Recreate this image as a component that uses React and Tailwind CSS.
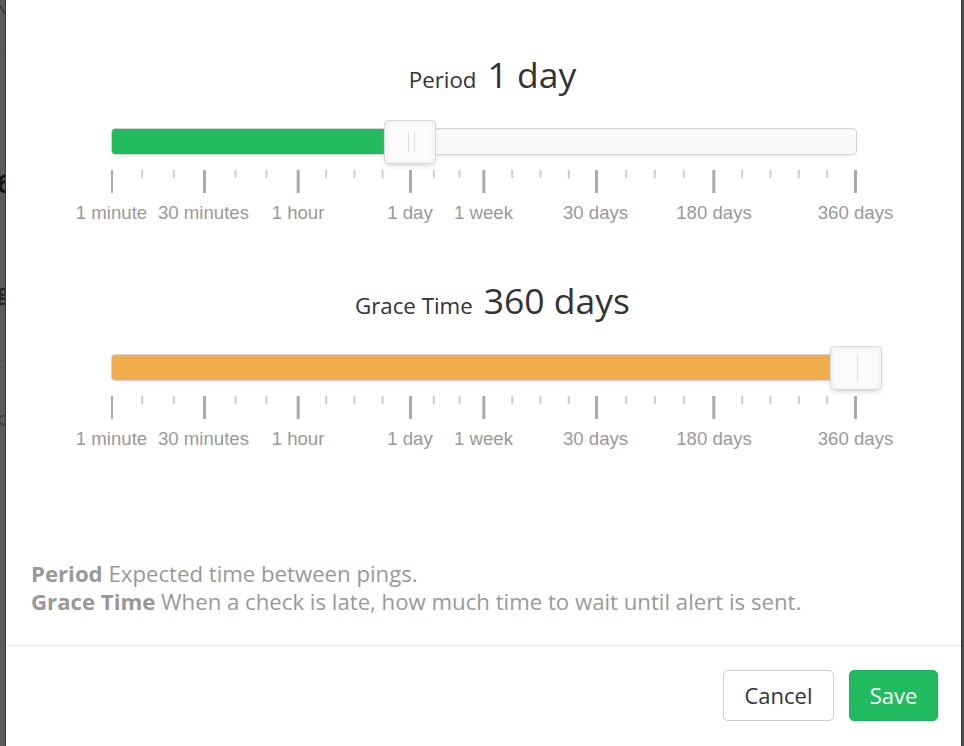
import React from 'react'

// offsets (px) from the left edge of the 746px track
const PIPS = [
  [0, 'big'], [30.7, 'sub'], [62.3, 'sub'], [93, 'big'], [124, 'sub'], [155, 'sub'],
  [186.7, 'big'], [214.7, 'sub'], [243, 'sub'], [271, 'sub'], [299, 'big'],
  [322.3, 'sub'], [348, 'sub'], [372.3, 'big'], [400.7, 'sub'], [429, 'sub'],
  [457.3, 'sub'], [485, 'big'], [514.7, 'sub'], [543.3, 'sub'], [572.3, 'sub'],
  [602.3, 'big'], [630.7, 'sub'], [659, 'sub'], [687.3, 'sub'], [715.7, 'sub'],
  [744, 'big'],
]

const LABELS = [
  [0.5, '1 minute'], [92.5, '30 minutes'], [187, '1 hour'], [299, '1 day'],
  [372.5, '1 week'], [484.5, '30 days'], [603, '180 days'], [744.5, '360 days'],
]

function Slider({ label, value, pos, fill, lines }) {
  return (
    <div>
      <div className="h-[44px] flex items-baseline justify-center gap-[11px] pl-[18px] text-[#333]">
        <span className="text-[22.3px] leading-[44px]">{label}</span>
        <span className="text-[35.5px] leading-[44px]">{value}</span>
      </div>

      <div className="ml-[105px] mr-[104px] mt-[32px]">
        {/* track */}
        <div className="relative h-[27px] rounded-[4px] border border-[#d3d3d3] bg-[#fafafa] shadow-[inset_0_1px_1px_#f0f0f0,0_3px_6px_-5px_#bbb] flex">
          <div className={`h-full rounded-l-[3px] ${fill}`} style={{ width: pos }} />
          {/* handle */}
          <div
            className="absolute top-[-9px] w-[52px] h-[44px] rounded-[4px] border border-[#d9d9d9] bg-[#fcfcfc] shadow-[inset_0_0_1px_#fff,inset_0_1px_7px_#ebebeb,0_3px_6px_-3px_#bbb] flex items-center justify-center gap-[5px] pl-[2px]"
            style={{ left: pos - 27 }}
          >
            {lines.map((h, i) => (
              <span key={i} className="w-px bg-[#dcdcdc]" style={{ height: h }} />
            ))}
          </div>
        </div>

        {/* pips */}
        <svg width="746" height="23" className="mt-[15px] block">
          {PIPS.map(([x, t]) =>
            t === 'big'
              ? <rect key={x} x={x - 1} y="0" width="3" height="23" fill="#aaa" />
              : <rect key={x} x={x - 0.5} y="0" width="2" height="8" fill="#cdcdcd" />
          )}
        </svg>
        <div className="relative h-[20px] mt-[10px] font-['Liberation_Sans',Arial,sans-serif] text-[18.6px] leading-[20px] text-[#999]">
          {LABELS.map(([x, t]) => (
            <span key={t} className="absolute top-0 -translate-x-1/2 whitespace-nowrap" style={{ left: x }}>
              {t}
            </span>
          ))}
        </div>
      </div>
    </div>
  )
}

export default function App() {
  return (
    <div className="h-[746px] w-[964px] overflow-hidden flex bg-[#565656] font-['Open_Sans',sans-serif]">
      {/* page behind the overlay */}
      <div className="w-[5px] shrink-0 overflow-hidden bg-[#5b5b5b]">
        <div className="w-[40px] -ml-[3px] text-[#262626]">
          <div className="h-[52px] text-[15px] leading-[18px] text-[#303030]">N</div>
          <div className="h-[118px] border-t border-[#505050]" />
          <div className="h-[110px] text-[26px] leading-[26px] font-bold text-[#151515]">6</div>
          <div className="h-[80px] text-[22px] leading-[22px] font-bold">g</div>
          <div className="h-[48px] border-t border-[#505050]" />
          <div className="text-[18px] leading-[20px] text-[#3a3a3a]">p</div>
        </div>
      </div>

      {/* modal */}
      <div className="flex-1 min-w-0 bg-white border-x border-[#3a3a3a] self-start">
        <div className="pt-[52px]">
          <Slider label="Period" value="1 day" pos={299} fill="bg-[#22bb5f]" lines={[20, 20]} />
          <div className="mt-[55px]">
            <Slider label="Grace Time" value="360 days" pos={745} fill="bg-[#f0ad4e] rounded-r-[3px]" lines={[24]} />
          </div>

          <div className="mt-[111px] px-[25px] pb-[29px] text-[22.2px] leading-[28px] text-[#999]">
            <p><b className="font-bold">Period</b> Expected time between pings.</p>
            <p><b className="font-bold">Grace Time</b> When a check is late, how much time to wait until alert is sent.</p>
          </div>
        </div>

        <div className="border-t border-[#e5e5e5] flex justify-end gap-[15px] pt-[24px] pr-[23px] pb-[40px]">
          <button className="h-[51px] w-[111px] rounded-[5px] border border-[#ccc] bg-white text-[22px] text-[#333]">
            Cancel
          </button>
          <button className="h-[51px] w-[89px] rounded-[5px] border border-[#1fae59] bg-[#22bb5f] text-[22px] text-white">
            Save
          </button>
        </div>
      </div>

      <div className="w-[2px] shrink-0 bg-[#4a4a4a]" />
    </div>
  )
}
